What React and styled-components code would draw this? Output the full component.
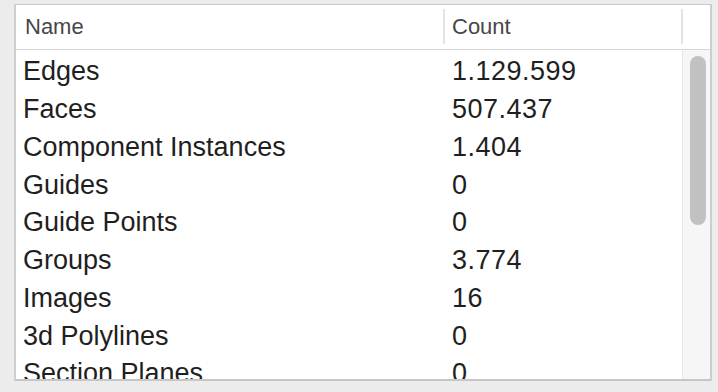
import styled, { createGlobalStyle } from "styled-components";

const GlobalStyle = createGlobalStyle`
  html, body {
    margin: 0;
    padding: 0;
    background: #ececec;
    font-family: "Liberation Sans", Arial, sans-serif;
  }
`;

const rows = [
  ["Edges", "1.129.599"],
  ["Faces", "507.437"],
  ["Component Instances", "1.404"],
  ["Guides", "0"],
  ["Guide Points", "0"],
  ["Groups", "3.774"],
  ["Images", "16"],
  ["3d Polylines", "0"],
  ["Section Planes", "0"],
];

export default function App() {
  return (
    <Page>
      <GlobalStyle />
      <Panel>
        <Header>
          <HeaderCell>Name</HeaderCell>
          <HeaderCell $divider>Count</HeaderCell>
          <HeaderCell $divider />
        </Header>
        <Body>
          <List>
            {rows.map(([name, count]) => (
              <Row key={name}>
                <NameCell>{name}</NameCell>
                <CountCell>{count}</CountCell>
              </Row>
            ))}
          </List>
          <Track>
            <Thumb />
          </Track>
        </Body>
      </Panel>
    </Page>
  );
}

const Page = styled.div`
  height: 392px;
  box-sizing: border-box;
  padding: 4px 6px 11px 14px;
  display: flex;
`;

const Panel = styled.div`
  flex: 1;
  display: grid;
  grid-template-rows: 45px 1fr;
  background: #ffffff;
  border: 1px solid #c9c9c9;
  border-left: 2px solid #cfcfcf;
  border-right: 2px solid #cdcdcd;
  border-bottom: 2px solid #c6c6c6;
  overflow: hidden;
`;

const Header = styled.div`
  display: grid;
  grid-template-columns: 427px 238px 1fr;
  border-bottom: 1px solid #d6d6d6;
  padding: 4px 0 5px;
`;

const HeaderCell = styled.div`
  display: flex;
  align-items: center;
  padding-left: ${(p) => (p.$divider ? "7px" : "9px")};
  border-left: ${(p) => (p.$divider ? "2px solid #e4e4e4" : "none")};
  font-size: 22px;
  color: #474747;
`;

const Body = styled.div`
  display: flex;
  min-height: 0;
`;

const List = styled.div`
  flex: 1;
  padding-top: 3px;
  overflow: hidden;
`;

const Row = styled.div`
  display: grid;
  grid-template-columns: 427px 1fr;
  align-items: center;
  height: 37.75px;
  font-size: 27px;
  color: #1f1f1f;
`;

const NameCell = styled.div`
  padding-left: 7px;
  white-space: nowrap;
`;

const CountCell = styled.div`
  padding-left: 9px;
  letter-spacing: 0.5px;
`;

const Track = styled.div`
  width: 28px;
  background: #f6f6f6;
  border-left: 1px solid #e6e6e6;
  padding: 6px 0 0 7px;
  box-sizing: border-box;
`;

const Thumb = styled.div`
  width: 16px;
  height: 169px;
  border-radius: 8px;
  background: #c1c1c1;
`;
